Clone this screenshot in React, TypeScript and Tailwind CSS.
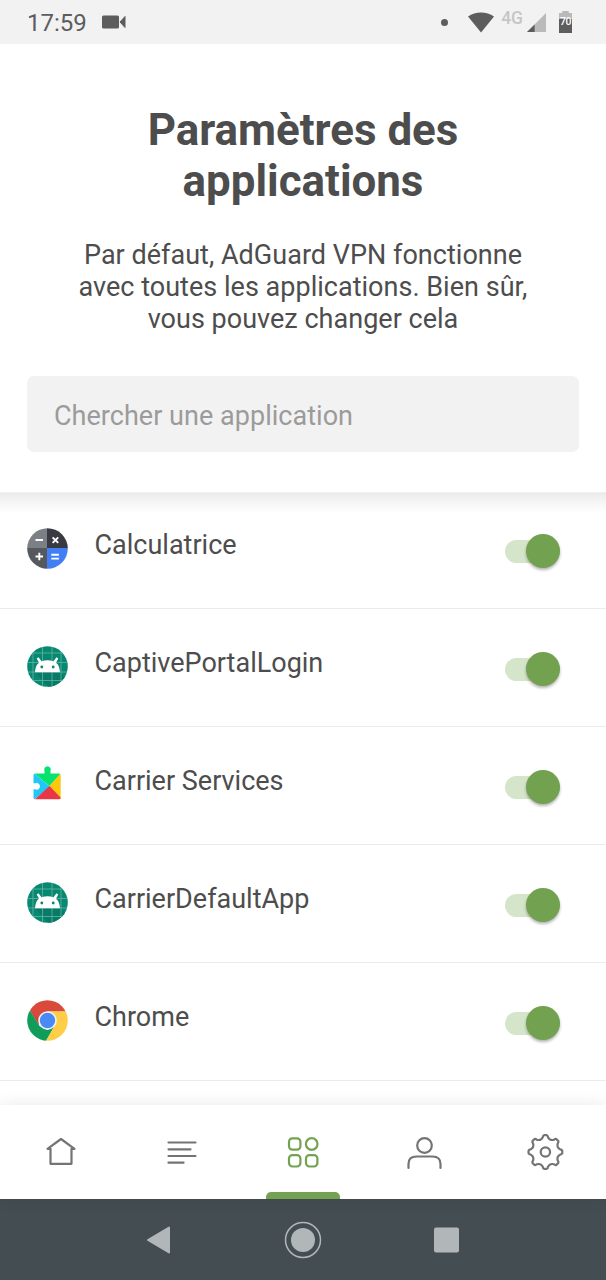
import type { ReactNode } from "react";

function CalculatorIcon() {
  return (
    <svg className="h-[41px] w-[41px]" viewBox="0 0 41 41">
      <clipPath id="calc"><circle cx="20.5" cy="20.5" r="20.3" /></clipPath>
      <g clipPath="url(#calc)">
        <path fill="#7b8087" d="M0 0h20v20H0z" />
        <path fill="#383c42" d="M20 0H41v20H20z" />
        <path fill="#55585d" d="M0 20h20V41H0z" />
        <path fill="#427ff4" d="M20 20H41V41H20z" />
      </g>
      <g stroke="#fff" strokeWidth="1.9">
        <path d="M8.5 12H16M25.600 9.300l5.600 5.600M31.200 9.300l-5.600 5.600M8.500 28.500H16M12.300 24.700v7.600M24.300 26.700h7.600M24.300 30.600h7.600" />
      </g>
    </svg>
  );
}

function AndroidIcon({ id }: { id: string }) {
  return (
    <svg className="h-[41px] w-[41px]" viewBox="0 0 41 41">
      <clipPath id={id}><circle cx="20.5" cy="20.5" r="20.3" /></clipPath>
      <g clipPath={`url(#${id})`}>
        <path fill="#078871" d="M0 0h41v41H0z" />
        <path fill="#077b68" d="M8 26h25l10 10v8H24z" />
        <path stroke="#62b5a5" strokeWidth=".8" d="M6 0v41M15.500 0v41M25 0v41M34 0v41M0 7h41M0 16.500h41M0 26h41M0 34.500h41" />
      </g>
      <path fill="#fff" d="M8 26.300c.2-4.600 1.500-7.800 4-9.600L9.700 12.600l1.800-1.300 3 4c3.700-1.500 8.300-1.500 12 0l3-4 1.800 1.300-2.300 4.100c2.500 1.800 3.800 5 4 9.600z" />
      <circle cx="14.800" cy="21" r="1.400" fill="#078871" />
      <circle cx="26.200" cy="21" r="1.400" fill="#078871" />
    </svg>
  );
}

function PuzzleIcon() {
  return (
    <svg className="h-[41px] w-[41px]" viewBox="0 0 41 41">
      <clipPath id="puzzle">
        <path d="M8.200 9h9.300V6.500a3.300 3.300 0 1 1 6 0V9h8.500q1.700 0 1.700 1.700v22.600q0 1.700-1.700 1.700H8.200q-1.700 0-1.700-1.700V24.800h1.500a3.400 3.400 0 1 0 0-6H6.500V10.700q0-1.700 1.700-1.700z" />
      </clipPath>
      <g clipPath="url(#puzzle)" transform="translate(0 .5)">
        <path fill="#05e36e" d="M6 0h29v8L22.500 21.500 6 8z" />
        <path fill="#1fc8f7" d="M6 8l17 14L6 36z" />
        <path fill="#fdc80c" d="M35 7.500V36L22 22z" />
        <path fill="#e93646" d="M6.500 36L22.500 21.500 35 34.500V36z" />
      </g>
    </svg>
  );
}

function ChromeIcon() {
  return (
    <svg className="h-[41px] w-[41px]" viewBox="0 0 41 41">
      <clipPath id="chrome"><circle cx="20.500" cy="20.500" r="20.300" /></clipPath>
      <g clipPath="url(#chrome)">
        <path fill="#d94a3b" d="M0 0h41v11.500H20.500L12 25 2.500 9.500z" />
        <path fill="#109d59" d="M2.500 9.500L12.500 26l8 4 7-4L19 41H0V14z" />
        <path fill="#ffcd46" d="M20.500 11.500H41V41H18.800l9.200-15.500z" />
        <path fill="#b53a2e" opacity=".35" d="M3.500 11.200l8.200 14L11.500 19z" />
      </g>
      <circle cx="20.500" cy="20.500" r="9.300" fill="#f3f3f3" />
      <circle cx="20.500" cy="20.500" r="7.700" fill="#4a8af5" />
    </svg>
  );
}

const apps: { name: string; icon: ReactNode }[] = [
  { name: "Calculatrice", icon: <CalculatorIcon /> },
  { name: "CaptivePortalLogin", icon: <AndroidIcon id="portal" /> },
  { name: "Carrier Services", icon: <PuzzleIcon /> },
  { name: "CarrierDefaultApp", icon: <AndroidIcon id="carrier" /> },
  { name: "Chrome", icon: <ChromeIcon /> },
];

function Toggle() {
  return (
    <button role="switch" aria-checked="true" className="mt-[6px] flex h-[34px] w-[55px] shrink-0 items-center justify-end rounded-full">
      <span className="-mr-[34px] h-[23px] w-[55px] shrink-0 rounded-full bg-[#d4e5ca]" />
      <span className="z-0 h-[34px] w-[34px] shrink-0 rounded-full bg-[#72a150] shadow-[0_2px_3px_rgba(0,0,0,0.3)]" />
    </button>
  );
}

function gearPath() {
  const point = (r: number, deg: number) => {
    const a = ((deg - 90) * Math.PI) / 180;
    return `${(20 + r * Math.cos(a)).toFixed(2)} ${(20 + r * Math.sin(a)).toFixed(2)}`;
  };
  let d = "";
  for (let k = 0; k < 8; k++) {
    const t = k * 45;
    d += `${k ? "L" : "M"}${point(16.9, t - 5)}L${point(16.9, t + 5)}Q${point(16.6, t + 9)} ${point(15, t + 10)}Q${point(12, t + 22.5)} ${point(15, t + 35)}Q${point(16.6, t + 36)} ${point(16.9, t + 40)}`;
  }
  return d + "Z";
}

function NavItem({ children, active = false }: { children: ReactNode; active?: boolean }) {
  return (
    <button className={active ? "relative flex flex-1 justify-center pt-[27px] text-[#73a352]" : "flex flex-1 justify-center pt-[27px] text-[#747474]"}>
      <svg className="h-10 w-10" viewBox="0 0 40 40" fill="none" stroke="currentColor" strokeWidth="2.2" strokeLinecap="round" strokeLinejoin="round">
        {children}
      </svg>
      {active && <span className="absolute bottom-0 h-[7px] w-[74px] rounded-t-[5px] bg-[#73a352]" />}
    </button>
  );
}

export default function App() {
  return (
    <div className="flex h-[1280px] w-[606px] flex-col overflow-hidden bg-white font-['Roboto',sans-serif] text-[#4d4d4d]">
      <header className="flex h-[44px] shrink-0 items-center bg-[#f2f2f2] pr-[34px] pl-[27px] text-[#5d5d5d]">
        <span className="pt-[2px] text-[24px] leading-[42px]">17:59</span>
        <svg className="ml-[15px] h-[14px] w-[25px]" viewBox="0 0 25 14" fill="currentColor">
          <rect x="0" y="0.500" width="17" height="13" rx="1.500" />
          <path d="M18 7l5-5.500v11z" stroke="currentColor" strokeLinejoin="round" />
        </svg>
        <span className="ml-auto h-[7px] w-[7px] rounded-full bg-[#5d5d5d]" />
        <svg className="ml-[19px] h-[21px] w-[28px]" viewBox="0 0 28 21" fill="currentColor">
          <path d="M1 4.500C8.500-1 19.500-1 27 4.500L14 20.500z" />
        </svg>
        <span className="mb-[8px] ml-[6px] text-[17.500px] leading-5 font-medium text-[#c6c6c6]">4G</span>
        <svg className="mt-[1px] ml-[4px] h-[19px] w-[19px]" viewBox="0 0 20 20">
          <path d="M0 20L20 0v20z" fill="#bababa" /><path d="M0 20l8-8v8z" fill="#5d5d5d" />
        </svg>
        <span className="relative ml-[13px] flex h-[22px] w-[13px] items-center justify-center">
          <svg className="absolute inset-0 h-[22px] w-[13px]" viewBox="0 0 12 22" preserveAspectRatio="none">
            <path d="M3 0h6v2h3v7H0V2h3z" fill="#b9b9b9" /><path d="M0 8h12v14H0z" fill="#5d5d5d" />
          </svg>
          <span className="relative text-[10.500px] leading-[22px] font-medium tracking-[-0.500px] text-white">70</span>
        </span>
      </header>

      <section className="flex h-[448px] shrink-0 flex-col items-center bg-white px-[27px] pt-[61px]">
        <h1 className="text-center text-[43.900px] leading-[51px] font-bold">Paramètres des<br />applications</h1>
        <p className="mt-[32px] text-center text-[27px] leading-[32px] tracking-[0.02px]">
          Par défaut, AdGuard VPN fonctionne<br />avec toutes les applications. Bien sûr,<br />vous pouvez changer cela
        </p>
        <input aria-label="Rechercher" placeholder="Chercher une application" className="mt-[41px] h-[76px] w-full shrink-0 rounded-[7px] bg-[#f2f2f2] px-[27px] pt-[3px] text-[27px] tracking-[0.03px] outline-none placeholder:text-[#9b9b9b]" />
      </section>

      <main className="h-[613px] shrink-0 overflow-hidden bg-[linear-gradient(to_bottom,#f6f6f6_0px,#ebebeb_1px,#f4f4f4_9px,#ffffff_21px)]">
        {apps.map((app) => (
          <div key={app.name} className="flex h-[118px] border-b border-[#ebebeb] pt-[37px] pr-[46px] pl-[26.500px] first:h-[117px] first:pt-[36.400px]">
            {app.icon}
            <span className="ml-[27px] flex-1 text-[27px] leading-[34px]">{app.name}</span>
            <Toggle />
          </div>
        ))}
      </main>

      <nav className="relative z-10 flex h-[94px] shrink-0 bg-white shadow-[0_0_16px_rgba(0,0,0,0.09)]">
        <NavItem><path d="M6.500 16.800L20 7l13.500 9.800h-3v15h-21v-15z" /></NavItem>
        <NavItem><path d="M6.500 10.500h27M6.500 17.300h22M6.500 24h27M6.500 30.700h15" /></NavItem>
        <NavItem active>
          <rect x="6" y="6.300" width="11.400" height="11.400" rx="3.500" />
          <circle cx="28.700" cy="12" r="5.800" />
          <rect x="6" y="23.100" width="11.400" height="11.400" rx="3.500" />
          <rect x="23" y="23.100" width="11.400" height="11.400" rx="3.500" />
        </NavItem>
        <NavItem>
          <circle cx="20.500" cy="13.500" r="7.300" />
          <path d="M4.500 36v-4q0-7.500 8-7.500h16q8 0 8 7.500v4" />
        </NavItem>
        <NavItem>
          <g transform="translate(0.400 0)"><path d={gearPath()} /><circle cx="20" cy="20" r="4.700" /></g>
        </NavItem>
      </nav>

      <footer className="flex h-[81px] shrink-0 items-center justify-center bg-[#444d52] text-[#b1b6b8]">
        <svg className="h-[40px] w-[314px]" viewBox="0 0 314 40" fill="currentColor">
          <path d="M2 20L23 7.500v25z" stroke="currentColor" strokeWidth="2" strokeLinejoin="round" />
          <circle cx="157" cy="20" r="12" /><circle cx="157" cy="20" r="17.500" fill="none" stroke="currentColor" strokeWidth="1.500" />
          <rect x="288" y="7.500" width="25" height="25" rx="2" />
        </svg>
      </footer>
    </div>
  );
}
